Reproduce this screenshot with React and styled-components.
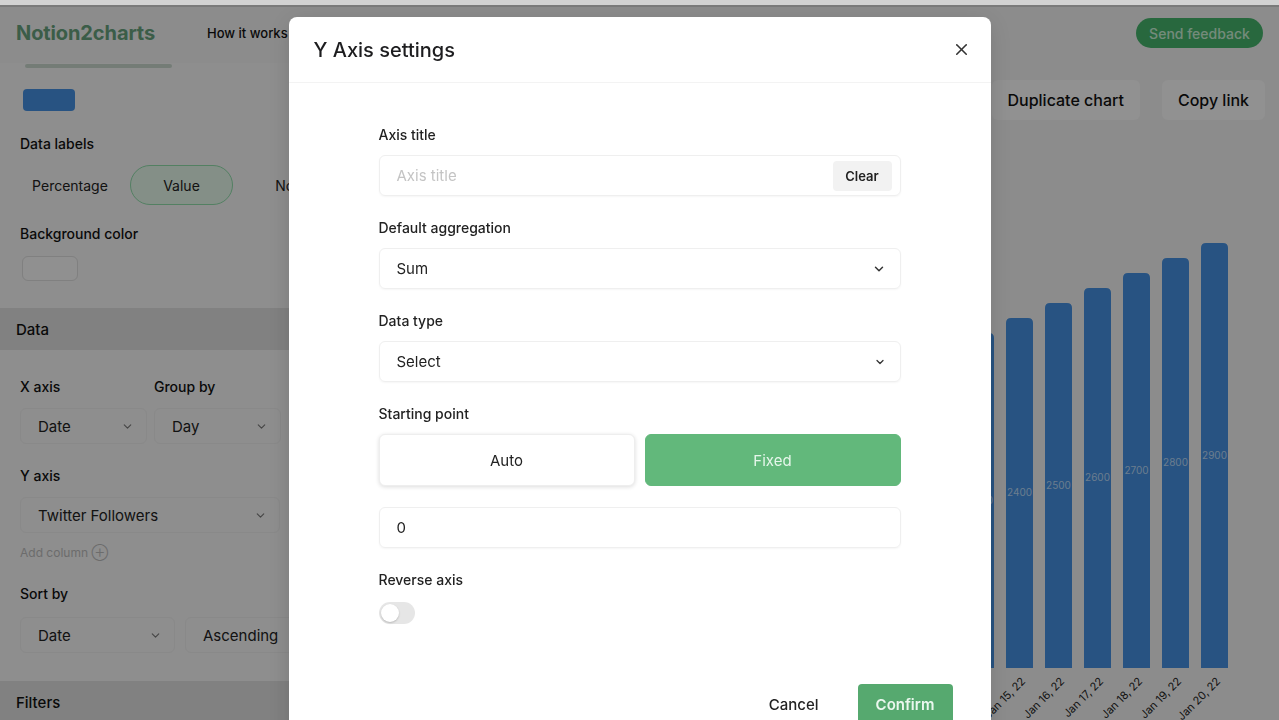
import React from "react";
import styled, { createGlobalStyle } from "styled-components";
import { ChevronDown, X } from "lucide-react";

const GlobalStyle = createGlobalStyle`
  html, body { margin: 0; padding: 0; }
  body {
    font-family: Inter, "Liberation Sans", Arial, sans-serif;
    color: #1d1d1f;
    background: #f2f2f2;
    overflow: hidden;
  }
  * { box-sizing: border-box; }
`;

const FrameTop = styled.div`
  position: relative;
  z-index: 30;
  height: 7px;
  background: #d2d2d2;
  border-bottom: 2px solid #7a7a7a;
`;

const Page = styled.div`
  height: 713px;
  display: flex;
  flex-direction: column;
  background: #f2f2f2;
`;

const TopNav = styled.header`
  height: 56px;
  flex: none;
  display: flex;
  align-items: center;
  padding: 0 16px 4px 16px;
`;

const Brand = styled.div`
  font-size: 20px;
  font-weight: 700;
  color: #66a07c;
  letter-spacing: -0.1px;
  width: 191px;
`;

const NavLink = styled.span`
  font-size: 13px;
  font-weight: 500;
  color: #111;
`;

const Spacer = styled.div`flex: 1;`;

const FeedbackButton = styled.button`
  border: none;
  background: #45b46c;
  color: #c9efd5;
  font: 500 14px Inter, sans-serif;
  height: 30px;
  width: 127px;
  padding: 0;
  border-radius: 15px;
`;

const Body = styled.div`
  flex: 1;
  display: grid;
  grid-template-columns: 290px 1fr;
  min-height: 0;
`;

const Sidebar = styled.aside`
  display: flex;
  flex-direction: column;
  background: #f4f4f4;
  overflow: hidden;
`;

const Section = styled.div`
  display: flex;
  flex-direction: column;
  padding: ${(p) => p.$pad || "0 20px 26px"};
`;

const SliderTrack = styled.div`
  margin: 1px 0 0 5px;
  width: 147px;
  height: 4px;
  border-radius: 2px;
  background: #c8d6cc;
`;

const ColorChip = styled.div`
  margin: 21px 0 0 3px;
  width: 52px;
  height: 22px;
  border-radius: 4px;
  background: #4590e0;
`;

const SideLabel = styled.div`
  font-size: 14px;
  font-weight: 500;
  color: #111;
  margin: ${(p) => p.$m || "0"};
  line-height: 16px;
`;

const Segments = styled.div`
  display: flex;
  align-items: center;
  gap: 10px;
  margin-top: 13px;
`;

const Segment = styled.div`
  height: 40px;
  display: flex;
  align-items: center;
  justify-content: center;
  font-size: 14px;
  color: #222;
  flex: none;
  width: ${(p) => p.$w}px;
  border-radius: 20px;
  border: 1.5px solid ${(p) => (p.$active ? "#8fdcaa" : "transparent")};
  background: ${(p) => (p.$active ? "#e4f7e9" : "transparent")};
`;

const Swatch = styled.div`
  margin: 14px 0 0 2px;
  width: 56px;
  height: 25px;
  border: 1px solid #dcdcdc;
  border-radius: 6px;
  background: #f8f8f8;
`;

const SectionHeader = styled.div`
  height: 42px;
  flex: none;
  display: flex;
  align-items: center;
  padding: 0 16px;
  background: #dedede;
  font-size: 15px;
  font-weight: 500;
  color: #111;
`;

const FieldRow = styled.div`
  display: flex;
  gap: ${(p) => p.$gap || 14}px;
  margin-top: ${(p) => p.$mt || 0}px;
`;

const FieldCol = styled.div`
  display: flex;
  flex-direction: column;
  flex: none;
  width: ${(p) => p.$w}px;
`;

const SideSelect = styled.div`
  height: 36px;
  margin-top: ${(p) => p.$mt ?? 13}px;
  flex: none;
  display: flex;
  align-items: center;
  justify-content: ${(p) => (p.$plain ? "flex-start" : "space-between")};
  padding: 0 12px 0 17px;
  border: 1px solid #ececec;
  border-radius: 6px;
  font-size: 15px;
  color: #222;
  white-space: nowrap;
  width: ${(p) => p.$w}px;
  svg { color: #777; flex: none; }
`;

const AddColumn = styled.div`
  margin-top: 12px;
  font-size: 12px;
  color: #bbb;
`;

const Main = styled.main`
  display: flex;
  flex-direction: column;
  min-width: 0;
`;

const Actions = styled.div`
  display: flex;
  justify-content: flex-end;
  gap: 22px;
  padding: 17px 14px 0 0;
`;

const ActionButton = styled.button`
  border: none;
  background: #fafafa;
  height: 40px;
  padding: 0 16px;
  border-radius: 6px;
  font: 500 16px Inter, sans-serif;
  color: #111;
`;

const ChartSvg = styled.svg`
  display: block;
  flex: none;
`;

const Overlay = styled.div`
  position: fixed;
  inset: 0;
  background: rgba(0, 0, 0, 0.42);
  z-index: 10;
`;

const Modal = styled.div`
  position: fixed;
  top: 17px;
  left: 50%;
  transform: translateX(-50%);
  width: 702px;
  background: #fff;
  border-radius: 8px;
  z-index: 20;
  display: flex;
  flex-direction: column;
  box-shadow: 0 4px 24px rgba(0, 0, 0, 0.15);
`;

const ModalHeader = styled.div`
  height: 66px;
  display: flex;
  align-items: center;
  justify-content: space-between;
  padding: 0 20px 0 25px;
  border-bottom: 1px solid #f3f3f3;
`;

const ModalTitle = styled.h2`
  margin: 0;
  font-size: 20px;
  font-weight: 500;
  color: #1d1d1f;
`;

const CloseButton = styled.button`
  border: none;
  background: none;
  padding: 0;
  display: flex;
  color: #333;
`;

const ModalBody = styled.div`
  padding: 44px 90px 0;
  display: flex;
  flex-direction: column;
`;

const Group = styled.div`
  display: flex;
  flex-direction: column;
  margin-bottom: ${(p) => p.$mb ?? 24}px;
`;

const Label = styled.label`
  font-size: 14px;
  line-height: 16px;
  font-weight: 500;
  color: #222;
  margin-bottom: ${(p) => p.$mb ?? 12}px;
`;

const InputBox = styled.div`
  height: 41px;
  display: flex;
  align-items: center;
  justify-content: space-between;
  padding: 0 8px 0 17px;
  border: 1px solid #efefef;
  border-radius: 6px;
  box-shadow: 0 1px 2px rgba(0, 0, 0, 0.04);
  font-size: 15px;
  color: #222;
  margin-top: ${(p) => p.$mt || 0}px;
`;

const Placeholder = styled.span`
  color: #c4c4c4;
  font-size: 15px;
`;

const ClearButton = styled.button`
  border: none;
  background: #f2f2f2;
  height: 30px;
  width: 59px;
  border-radius: 4px;
  font: 600 13px Inter, sans-serif;
  color: #222;
`;

const SelectBox = styled(InputBox)`
  padding-right: 14px;
  svg { color: #333; }
`;

const Toggles = styled.div`
  display: grid;
  grid-template-columns: 1fr 1fr;
  gap: 10px;
`;

const ToggleOption = styled.button`
  height: 52px;
  border-radius: 6px;
  font: 400 15px Inter, sans-serif;
  border: 1px solid ${(p) => (p.$active ? "#62b87b" : "#eeeeee")};
  background: ${(p) => (p.$active ? "#62b87b" : "#fff")};
  color: ${(p) => (p.$active ? "#e6f6eb" : "#222")};
  box-shadow: ${(p) => (p.$active ? "none" : "0 1px 4px rgba(0,0,0,0.14)")};
`;

const Switch = styled.div`
  width: 36px;
  height: 22px;
  border-radius: 11px;
  background: #e6e6e6;
  padding: 2px;
  display: flex;
`;

const Knob = styled.div`
  width: 18px;
  height: 18px;
  border-radius: 50%;
  background: #fff;
  box-shadow: 0 1px 2px rgba(0, 0, 0, 0.2);
`;

const ModalFooter = styled.div`
  display: flex;
  justify-content: flex-end;
  align-items: center;
  gap: 23px;
  padding: 60px 38px 20px;
`;

const CancelButton = styled.button`
  border: none;
  background: none;
  font: 500 15px Inter, sans-serif;
  color: #222;
  padding: 0 16px;
  height: 40px;
`;

const ConfirmButton = styled.button`
  border: none;
  background: #56a96f;
  color: #eaf7ee;
  font: 600 15px Inter, sans-serif;
  width: 95px;
  height: 40px;
  border-radius: 4px;
`;

const OX = 290;
const OY = 120;
const bars = Array.from({ length: 18 }, (_, k) => {
  const x = 1201 - 39 * k - OX;
  const top = 243 + 15 * k - OY;
  return { x, top, value: 2900 - 100 * k, day: 20 - k };
}).filter((b) => b.x > -30 && b.top < 540);

function Chart() {
  const bottom = 668 - OY;
  return (
    <ChartSvg width="989" height="600" viewBox="0 0 989 600">
      {bars.map((b) => (
        <g key={b.x}>
          <path
            d={`M${b.x} ${bottom} V${b.top + 5} Q${b.x} ${b.top} ${b.x + 5} ${b.top} H${b.x + 22} Q${b.x + 27} ${b.top} ${b.x + 27} ${b.top + 5} V${bottom} Z`}
            fill="#4590e0"
          />
          <text
            x={b.x + 13.5}
            y={(b.top + bottom) / 2 + 3}
            textAnchor="middle"
            fontSize="10"
            fill="#b9d6f5"
            fontFamily="Inter, sans-serif"
          >
            {b.value}
          </text>
          <text
            x={b.x + 20}
            y={bottom + 14}
            textAnchor="end"
            fontSize="11"
            fill="#222"
            fontFamily="Inter, sans-serif"
            transform={`rotate(-45 ${b.x + 20} ${bottom + 14})`}
          >
            {`Jan ${b.day > 0 ? b.day : b.day + 31}, 22`}
          </text>
        </g>
      ))}
    </ChartSvg>
  );
}

export default function App() {
  return (
    <>
      <GlobalStyle />
      <FrameTop />
      <Page>
        <TopNav>
          <Brand>Notion2charts</Brand>
          <NavLink>How it works</NavLink>
          <Spacer />
          <FeedbackButton>Send feedback</FeedbackButton>
        </TopNav>
        <Body>
          <Sidebar>
            <Section $pad="0 20px 27px">
              <SliderTrack />
              <ColorChip />
              <SideLabel $m="25px 0 0">Data labels</SideLabel>
              <Segments>
                <Segment $w={100}>Percentage</Segment>
                <Segment $w={103} $active>Value</Segment>
                <Segment $w={100}>None</Segment>
              </Segments>
              <SideLabel $m="21px 0 0">Background color</SideLabel>
              <Swatch />
            </Section>
            <SectionHeader>Data</SectionHeader>
            <Section $pad="29px 20px 28px">
              <FieldRow $gap={7}>
                <FieldCol $w={127}>
                  <SideLabel>X axis</SideLabel>
                  <SideSelect $w={127}>
                    Date <ChevronDown size={13} />
                  </SideSelect>
                </FieldCol>
                <FieldCol $w={127}>
                  <SideLabel>Group by</SideLabel>
                  <SideSelect $w={127}>
                    Day <ChevronDown size={13} />
                  </SideSelect>
                </FieldCol>
              </FieldRow>
              <SideLabel $m="24px 0 0">Y axis</SideLabel>
              <SideSelect $w={260}>
                Twitter Followers <ChevronDown size={13} />
              </SideSelect>
              <AddColumn>Add column ⊕</AddColumn>
              <SideLabel $m="26px 0 0">Sort by</SideLabel>
              <FieldRow $gap={10} $mt={15}>
                <SideSelect $w={155} $mt={0}>
                  Date <ChevronDown size={13} />
                </SideSelect>
                <SideSelect $w={115} $mt={0} $plain>
                  Ascending
                </SideSelect>
              </FieldRow>
            </Section>
            <SectionHeader>Filters</SectionHeader>
          </Sidebar>
          <Main>
            <Actions>
              <ActionButton>Duplicate chart</ActionButton>
              <ActionButton>Copy link</ActionButton>
            </Actions>
            <Chart />
          </Main>
        </Body>
      </Page>
      <Overlay />
      <Modal>
        <ModalHeader>
          <ModalTitle>Y Axis settings</ModalTitle>
          <CloseButton aria-label="Close">
            <X size={19} strokeWidth={2} />
          </CloseButton>
        </ModalHeader>
        <ModalBody>
          <Group>
            <Label>Axis title</Label>
            <InputBox>
              <Placeholder>Axis title</Placeholder>
              <ClearButton>Clear</ClearButton>
            </InputBox>
          </Group>
          <Group>
            <Label>Default aggregation</Label>
            <SelectBox>
              Sum <ChevronDown size={14} strokeWidth={2.5} />
            </SelectBox>
          </Group>
          <Group>
            <Label>Data type</Label>
            <SelectBox>
              Select <ChevronDown size={12} strokeWidth={2.5} />
            </SelectBox>
          </Group>
          <Group>
            <Label>Starting point</Label>
            <Toggles>
              <ToggleOption>Auto</ToggleOption>
              <ToggleOption $active>Fixed</ToggleOption>
            </Toggles>
            <InputBox $mt={21}>0</InputBox>
          </Group>
          <Group $mb={0}>
            <Label $mb={14}>Reverse axis</Label>
            <Switch>
              <Knob />
            </Switch>
          </Group>
        </ModalBody>
        <ModalFooter>
          <CancelButton>Cancel</CancelButton>
          <ConfirmButton>Confirm</ConfirmButton>
        </ModalFooter>
      </Modal>
    </>
  );
}
